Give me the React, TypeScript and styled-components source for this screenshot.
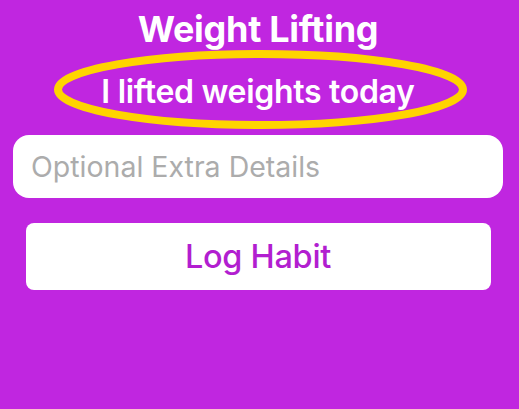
import React from "react";
import styled, { createGlobalStyle } from "styled-components";

const Global = createGlobalStyle`
  html, body { margin: 0; padding: 0; background: #c026e0; }
  body { font-family: Inter, "Noto Sans", sans-serif; }
`;

const Screen = styled.div`
  width: 519px;
  height: 409px;
  background: #c026e0;
  display: flex;
  flex-direction: column;
  align-items: center;
  box-sizing: border-box;
  padding-top: 8px;
  padding-right: 3px;
`;

const Title = styled.h1`
  position: relative;
  z-index: 1;
  margin: 0;
  font-size: 36px;
  font-weight: 700;
  color: #ffffff;
  line-height: 42px;
  letter-spacing: -0.3px;
`;

const SubtitleWrap = styled.div`
  position: relative;
  width: 516px;
  height: 79px;
  display: flex;
  justify-content: center;
  align-items: center;
`;

const Subtitle = styled.div`
  font-size: 32px;
  font-weight: 600;
  color: #ffffff;
  letter-spacing: -0.3px;
  padding-top: 3px;
`;

const Ring = styled.svg`
  position: absolute;
  left: 54px;
  top: 0;
  width: 413px;
  height: 79px;
  pointer-events: none;
`;

const Field = styled.input`
  box-sizing: border-box;
  margin-top: 6px;
  width: 490px;
  height: 63px;
  border: none;
  border-radius: 16px;
  background: #ffffff;
  padding: 0 18px;
  font-family: Inter, "Noto Sans", sans-serif;
  font-size: 28.5px;
  color: #222;
  outline: none;
  &::placeholder { color: #acacac; }
`;

const LogButton = styled.button`
  box-sizing: border-box;
  margin-top: 25px;
  width: 465px;
  height: 67px;
  border: none;
  border-radius: 8px;
  background: #ffffff;
  color: #b21ed0;
  font-family: Inter, "Noto Sans", sans-serif;
  font-size: 32.5px;
  font-weight: 500;
  letter-spacing: -0.3px;
  cursor: pointer;
`;

export default function App() {
  return (
    <>
      <Global />
      <Screen>
        <Title>Weight Lifting</Title>
        <SubtitleWrap>
          <Ring viewBox="0 0 413 79">
            <ellipse cx="206.5" cy="39.5" rx="202.5" ry="35.5" fill="none" stroke="#ffd400" strokeWidth="8" />
          </Ring>
          <Subtitle>I lifted weights today</Subtitle>
        </SubtitleWrap>
        <Field placeholder="Optional Extra Details" />
        <LogButton>Log Habit</LogButton>
      </Screen>
    </>
  );
}
